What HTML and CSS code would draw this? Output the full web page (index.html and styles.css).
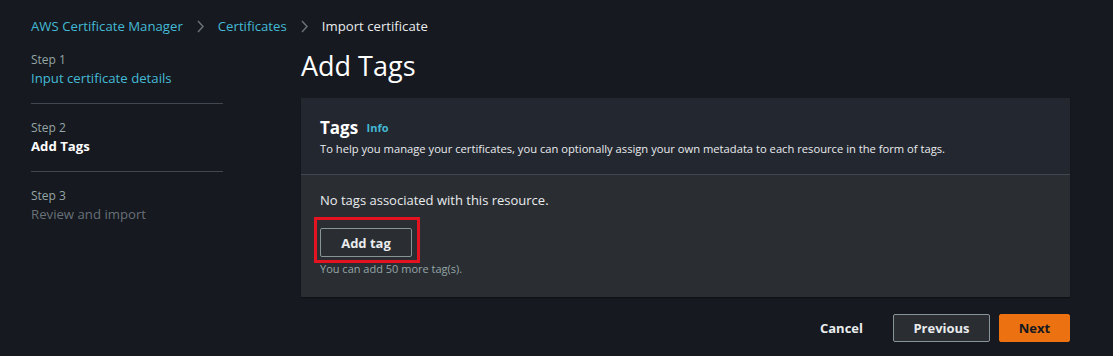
FILE: index.html
```html
<!DOCTYPE html>
<html lang="en">

<head>
    <meta charset="UTF-8">
    <title>Import certificate</title>
    <link rel="stylesheet" href="styles.css">
</head>

<body>
    <div class="page">
        <nav class="breadcrumbs">
            <a href="#" class="crumb-link">AWS Certificate Manager</a>
            <svg class="crumb-sep" width="7" height="13" viewBox="0 0 7 13"><path d="M1 1 L6 6.5 L1 12" fill="none" stroke="#687078" stroke-width="1.5"/></svg>
            <a href="#" class="crumb-link">Certificates</a>
            <svg class="crumb-sep" width="7" height="13" viewBox="0 0 7 13"><path d="M1 1 L6 6.5 L1 12" fill="none" stroke="#687078" stroke-width="1.5"/></svg>
            <span class="crumb-current">Import certificate</span>
        </nav>

        <div class="layout">
            <ul class="steps">
                <li class="step">
                    <div class="step-num">Step 1</div>
                    <a href="#" class="step-title step-link">Input certificate details</a>
                </li>
                <li class="step">
                    <div class="step-num">Step 2</div>
                    <div class="step-title step-active">Add Tags</div>
                </li>
                <li class="step">
                    <div class="step-num">Step 3</div>
                    <div class="step-title step-disabled">Review and import</div>
                </li>
            </ul>

            <main class="content">
                <h1 class="page-title">Add Tags</h1>

                <section class="panel">
                    <div class="panel-header">
                        <h2 class="panel-title">Tags <a href="#" class="info">Info</a></h2>
                        <p class="panel-desc">To help you manage your certificates, you can optionally assign your own metadata to each resource in the form of tags.</p>
                    </div>
                    <div class="panel-body">
                        <p class="empty-text">No tags associated with this resource.</p>
                        <div class="highlight">
                            <button class="btn btn-normal btn-small">Add tag</button>
                        </div>
                        <p class="hint">You can add 50 more tag(s).</p>
                    </div>
                </section>

                <div class="actions">
                    <button class="btn btn-link">Cancel</button>
                    <button class="btn btn-normal btn-prev">Previous</button>
                    <button class="btn btn-primary">Next</button>
                </div>
            </main>
        </div>
    </div>
</body>

</html>
```

FILE: styles.css
```css
body {
    margin: 0;
    background-color: #16191f;
    font-family: "Open Sans", "Noto Sans", sans-serif;
    color: #d1d5db;
}

a {
    text-decoration: none;
}

.page {
    width: 1113px;
    height: 356px;
    overflow: hidden;
}

.breadcrumbs {
    display: flex;
    align-items: center;
    height: 20px;
    padding: 16px 0 0 31px;
    font-size: 13.2px;
}

.crumb-link {
    color: #44b9d6;
}

.crumb-sep {
    margin: 0 14px;
}

.crumb-current {
    color: #e9ebed;
}

.layout {
    display: flex;
    gap: 78px;
    padding: 0 43px 0 31px;
}

.steps {
    list-style: none;
    margin: 0;
    padding: 16px 0 0;
    width: 192px;
    flex-shrink: 0;
}

.step {
    padding: 0 0 15px;
    margin-bottom: 16px;
    border-bottom: 1px solid #414750;
}

.step:last-child {
    border-bottom: none;
}

.step-num {
    font-size: 12px;
    color: #95a5a6;
    line-height: 16px;
}

.step-title {
    display: block;
    font-size: 13.2px;
    line-height: 20px;
}

.step-link {
    color: #44b9d6;
}

.step-active {
    color: #ffffff;
    font-weight: 700;
}

.step-disabled {
    color: #687078;
}

.content {
    flex: 1;
}

.page-title {
    margin: 0;
    padding: 12px 0 0;
    height: 50px;
    font-size: 27px;
    font-weight: 400;
    color: #ffffff;
    line-height: 36px;
}

.panel {
    background-color: #2a2e33;
    box-shadow: 0 1px 1px rgba(0, 0, 0, 0.3);
}

.panel-header {
    background-color: #232730;
    padding: 18px 19px 16px;
    border-bottom: 1px solid #414750;
}

.panel-title {
    margin: 0;
    font-size: 17px;
    font-weight: 700;
    color: #ffffff;
    line-height: 24px;
}

.info {
    margin-left: 4px;
    font-size: 11px;
    font-weight: 700;
    color: #44b9d6;
    vertical-align: 2px;
}

.panel-desc {
    margin: 0;
    font-size: 11.2px;
    line-height: 18px;
    color: #e9ebed;
}

.panel-body {
    padding: 14px 19px 20px;
}

.empty-text {
    margin: 0 0 6px;
    font-size: 13px;
    line-height: 22px;
    color: #e9ebed;
}

.highlight {
    display: inline-block;
    border: 3px solid #e3141f;
    padding: 8px 5px 3px 3px;
    margin-left: -6px;
}

.btn {
    font-family: inherit;
    font-weight: 700;
    font-size: 13px;
    cursor: pointer;
    border-radius: 2px;
}

.btn-normal {
    background-color: #2a2e33;
    color: #e9ebed;
    border: 1px solid #879596;
}

.btn-small {
    display: block;
    width: 92px;
    height: 29px;
    padding: 0;
}

.hint {
    margin: -2px 0 0;
    font-size: 11px;
    line-height: 16px;
    color: #95a5a6;
}

.actions {
    display: flex;
    justify-content: flex-end;
    align-items: center;
    gap: 9px;
    margin-top: 17px;
}

.btn-link {
    background: none;
    border: none;
    color: #e9ebed;
    margin-right: 15px;
}

.btn-prev {
    width: 97px;
    height: 28px;
}

.btn-primary {
    width: 71px;
    height: 28px;
    background-color: #ec7211;
    border: 1px solid #ec7211;
    color: #16191f;
}
```
